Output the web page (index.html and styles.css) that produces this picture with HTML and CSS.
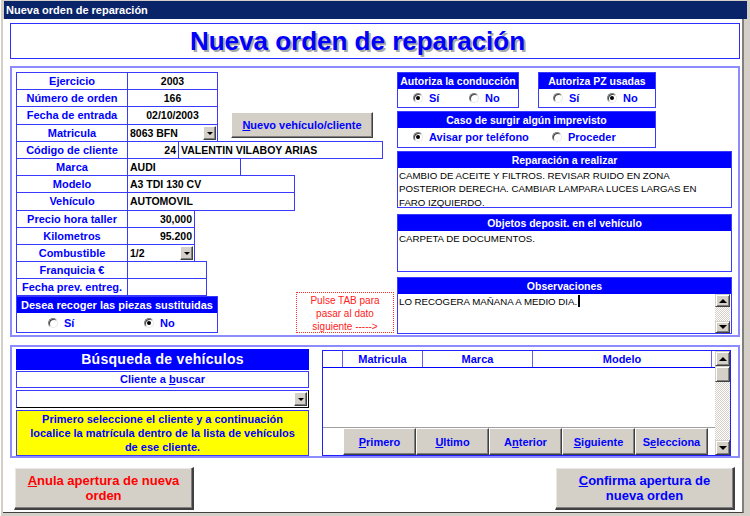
FILE: index.html
```html
<!DOCTYPE html>
<html lang="es">
<head>
    <meta charset="UTF-8">
    <title>Nueva orden de reparación</title>
    <link rel="stylesheet" href="styles.css">
</head>
<body>
<div class="window">
    <div class="titlebar">Nueva orden de reparación</div>
    <div class="client">
        <div class="heading"><h1>Nueva orden de reparación</h1></div>

        <div class="main-box">
            <div class="left-col">
                <div class="top-rows">
                    <div class="rows">
                        <div class="row"><div class="lbl">Ejercicio</div><div class="val w91 center">2003</div></div>
                        <div class="row"><div class="lbl">Número de orden</div><div class="val w91 center">166</div></div>
                        <div class="row"><div class="lbl">Fecha de entrada</div><div class="val w91 center">02/10/2003</div></div>
                        <div class="row"><div class="lbl">Matricula</div><div class="val w91 combo-val"><span>8063 BFN</span><span class="dd"></span></div></div>
                    </div>
                    <button class="btn btn-new"><u>N</u>uevo vehículo/cliente</button>
                </div>
                <div class="rows rows-rest">
                    <div class="row"><div class="lbl">Código de cliente</div><div class="val w52 right">24</div><div class="val w205">VALENTIN VILABOY ARIAS</div></div>
                    <div class="row"><div class="lbl">Marca</div><div class="val w114">AUDI</div></div>
                    <div class="row"><div class="lbl">Modelo</div><div class="val w168">A3 TDI 130 CV</div></div>
                    <div class="row"><div class="lbl">Vehículo</div><div class="val w168">AUTOMOVIL</div></div>
                    <div class="row"><div class="lbl">Precio hora taller</div><div class="val w68 right">30,000</div></div>
                    <div class="row"><div class="lbl">Kilometros</div><div class="val w68 right">95.200</div></div>
                    <div class="row"><div class="lbl">Combustible</div><div class="val w68 combo-val"><span>1/2</span><span class="dd"></span></div></div>
                    <div class="row"><div class="lbl">Franquicia €</div><div class="val w80"></div></div>
                    <div class="row"><div class="lbl">Fecha prev. entreg.</div><div class="val w80"></div></div>
                </div>
                <div class="bottom-row">
                    <div class="panel desea">
                        <div class="panel-h">Desea recoger las piezas sustituidas</div>
                        <div class="opts opts-desea">
                            <label class="opt"><span class="radio"></span>Sí</label>
                            <label class="opt"><span class="radio on"></span>No</label>
                        </div>
                    </div>
                    <div class="tab-note">Pulse TAB para<br>pasar al dato<br>siguiente -----&gt;</div>
                </div>
            </div>

            <div class="right-col">
                <div class="auth-row">
                    <div class="panel auth-a">
                        <div class="panel-h">Autoriza la conducción</div>
                        <div class="opts opts-a">
                            <label class="opt"><span class="radio on"></span>Sí</label>
                            <label class="opt"><span class="radio"></span>No</label>
                        </div>
                    </div>
                    <div class="panel auth-b">
                        <div class="panel-h">Autoriza PZ usadas</div>
                        <div class="opts opts-b">
                            <label class="opt"><span class="radio"></span>Sí</label>
                            <label class="opt"><span class="radio on"></span>No</label>
                        </div>
                    </div>
                </div>
                <div class="panel caso">
                    <div class="panel-h">Caso de surgir algún imprevisto</div>
                    <div class="opts opts-caso">
                        <label class="opt"><span class="radio on"></span>Avisar por teléfono</label>
                        <label class="opt"><span class="radio"></span>Proceder</label>
                    </div>
                </div>
                <div class="panel memo-panel reparacion">
                    <div class="panel-h">Reparación a realizar</div>
                    <div class="memo">CAMBIO DE ACEITE Y FILTROS. REVISAR RUIDO EN ZONA<br>POSTERIOR DERECHA. CAMBIAR LAMPARA LUCES LARGAS EN<br>FARO IZQUIERDO.</div>
                </div>
                <div class="panel memo-panel objetos">
                    <div class="panel-h">Objetos deposit. en el vehículo</div>
                    <div class="memo">CARPETA DE DOCUMENTOS.</div>
                </div>
                <div class="panel memo-panel observaciones">
                    <div class="panel-h">Observaciones</div>
                    <div class="memo-wrap">
                        <div class="memo">LO RECOGERA MAÑANA A MEDIO DIA.<span class="caret"></span></div>
                        <div class="vscroll short">
                            <span class="sb-btn up"></span>
                            <span class="sb-track"></span>
                            <span class="sb-btn down"></span>
                        </div>
                    </div>
                </div>
            </div>
        </div>

        <div class="search-box">
            <div class="search-left">
                <div class="search-h">Búsqueda de vehículos</div>
                <div class="search-label">Cliente a <u>b</u>uscar</div>
                <div class="combo"><span class="dd"></span></div>
                <div class="hint">Primero seleccione el cliente y a continuación<br>localice la matrícula dentro de la lista de vehículos<br>de ese cliente.</div>
            </div>
            <div class="listbox">
                <div class="lb-main">
                    <div class="lb-head">
                        <div class="lb-col c0"></div>
                        <div class="lb-col c1">Matricula</div>
                        <div class="lb-col c2">Marca</div>
                        <div class="lb-col c3">Modelo</div>
                    </div>
                    <div class="lb-body"></div>
                    <div class="lb-btns">
                        <button class="btn lb-btn"><u>P</u>rimero</button>
                        <button class="btn lb-btn"><u>U</u>ltimo</button>
                        <button class="btn lb-btn">A<u>n</u>terior</button>
                        <button class="btn lb-btn"><u>S</u>iguiente</button>
                        <button class="btn lb-btn">S<u>e</u>lecciona</button>
                    </div>
                </div>
                <div class="vscroll">
                    <span class="sb-btn up"></span>
                    <span class="sb-thumb"></span>
                    <span class="sb-track"></span>
                    <span class="sb-btn down"></span>
                </div>
            </div>
        </div>

        <div class="actions">
            <button class="btn big-btn cancel"><u>A</u>nula apertura de nueva orden</button>
            <button class="btn big-btn confirm"><u>C</u>onfirma apertura de nueva orden</button>
        </div>
    </div>
</div>
</body>
</html>
```

FILE: styles.css
```css
:root {
    --blue: #0000ff;
    --line: #3a3aff;
    --frame: #8c8cff;
    --face: #d4d0c8;
    --shadow: #808080;
    --dark: #404040;
}

* {
    margin: 0;
    padding: 0;
    box-sizing: border-box;
}

body {
    background: var(--face);
    font-family: 'Liberation Sans', Arial, sans-serif;
}

.window {
    width: 750px;
    height: 516px;
    padding: 1px 3px 3px 3px;
    background: var(--face);
    border-left: 1px solid #fff;
}

.titlebar {
    height: 18px;
    line-height: 18px;
    background: #0a246a;
    color: #fff;
    font-size: 11px;
    font-weight: bold;
    padding-left: 2px;
}

.client {
    width: 741px;
    height: 494px;
    margin-left: -1px;
    background: #fff;
    padding: 4px 0 0 7px;
    border-right: 2px solid var(--shadow);
    border-bottom: 1px solid var(--dark);
}

/* heading */
.heading {
    width: 730px;
    height: 36px;
    border: 1px solid #2d2dff;
    display: flex;
    align-items: center;
    justify-content: center;
    padding-right: 35px;
}

.heading h1 {
    color: var(--blue);
    font-size: 26px;
    font-weight: bold;
    text-shadow: 2px 2px 0 #a8a8a8;
    line-height: 1;
}

/* main block */
.main-box {
    width: 730px;
    height: 271px;
    margin-top: 7px;
    border: 2px solid var(--frame);
    padding: 4px 0 0 4px;
    display: flex;
}

.left-col {
    width: 378px;
}

.top-rows {
    display: flex;
}

.rows-rest {
    margin-top: -1px;
}

.row {
    display: flex;
    height: 18.2px;
    margin-top: -1px;
}

.row:first-child {
    margin-top: 0;
}

.lbl {
    width: 112px;
    height: 100%;
    border: 1px solid var(--line);
    color: var(--blue);
    font-size: 11px;
    font-weight: bold;
    text-align: center;
    line-height: 16px;
    white-space: nowrap;
}

.val {
    height: 100%;
    margin-left: -1px;
    border: 1px solid var(--line);
    font-size: 10.5px;
    font-weight: bold;
    line-height: 16px;
    padding: 0 2px;
    white-space: nowrap;
    color: #000;
}

.center { text-align: center; }
.right { text-align: right; }

.w91 { width: 91px; }
.w52 { width: 52px; }
.w205 { width: 205px; }
.w114 { width: 114px; }
.w168 { width: 168px; }
.w68 { width: 68px; }
.w80 { width: 80px; }

.combo-val {
    display: flex;
    justify-content: space-between;
    align-items: center;
    padding-right: 1px;
}

.dd {
    width: 13px;
    height: 14px;
    background: var(--face);
    border: 1px solid;
    border-color: #fff var(--dark) var(--dark) #fff;
    box-shadow: inset -1px -1px 0 var(--shadow);
    display: flex;
    align-items: center;
    justify-content: center;
}

.dd::after {
    content: "";
    border-top: 3px solid #000;
    border-left: 3px solid transparent;
    border-right: 3px solid transparent;
    margin-top: 1px;
}

.btn {
    font-family: 'Liberation Sans', Arial, sans-serif;
    font-weight: bold;
    background: var(--face);
    color: var(--blue);
    border: 1px solid;
    border-color: #fff var(--dark) var(--dark) #fff;
    box-shadow: inset -1px -1px 0 var(--shadow);
    cursor: pointer;
}

.btn-new {
    width: 142px;
    height: 26px;
    margin: 40px 0 0 13px;
    font-size: 11px;
}

.bottom-row {
    display: flex;
    align-items: flex-end;
    margin-top: -4px;
}

.panel {
    border: 1px solid var(--line);
    background: #fff;
}

.panel-h {
    height: 16px;
    line-height: 16px;
    background: var(--blue);
    color: #fff;
    font-size: 10.5px;
    font-weight: bold;
    text-align: center;
    white-space: nowrap;
}

.desea {
    width: 202px;
    height: 37px;
}

.desea .panel-h {
    font-size: 11px;
}

.tab-note {
    width: 98px;
    height: 41px;
    margin-left: 78px;
    border: 1px dotted #ff3030;
    color: #ff2020;
    font-size: 10px;
    line-height: 13px;
    text-align: center;
    padding-top: 1px;
}

/* radio groups */
.opts {
    display: flex;
    align-items: center;
    height: 18px;
}

.opt {
    display: flex;
    align-items: center;
    gap: 6px;
    color: var(--blue);
    font-size: 11px;
    font-weight: bold;
    white-space: nowrap;
}

.radio {
    width: 10px;
    height: 10px;
    border-radius: 50%;
    background: #fff;
    border: 1px solid;
    border-color: var(--shadow) #e8e8e8 #e8e8e8 var(--shadow);
    box-shadow: inset 1px 1px 0 var(--dark);
    display: flex;
    align-items: center;
    justify-content: center;
}

.radio.on::after {
    content: "";
    width: 4px;
    height: 4px;
    border-radius: 50%;
    background: #000;
}

.opts-a { padding-left: 15px; }
.opts-a .opt:first-child { width: 56px; }
.opts-b { padding-left: 14px; }
.opts-b .opt:first-child { width: 54px; }
.opts-caso { padding-left: 15px; }
.opts-caso .opt:first-child { width: 139px; }
.opts-desea { padding-left: 31px; height: 19px; }
.opts-desea .opt:first-child { width: 96px; }

/* right column */
.right-col {
    width: 335px;
    margin-left: 3px;
}

.auth-row {
    display: flex;
    gap: 19px;
}

.auth-a { width: 122px; height: 36px; }
.auth-b { width: 118px; height: 36px; }

.caso {
    width: 259px;
    height: 37px;
    margin-top: 3px;
}

.memo-panel {
    width: 335px;
}

.reparacion { height: 57px; margin-top: 3px; }
.objetos { height: 58px; margin-top: 6px; }
.observaciones { height: 57px; margin-top: 5px; }

.memo {
    font-size: 9.7px;
    line-height: 13.3px;
    padding: 1px 1px;
    color: #000;
    white-space: nowrap;
}

.memo-wrap {
    display: flex;
    height: 39px;
}

.memo-wrap .memo {
    flex: 1;
}

.caret {
    display: inline-block;
    width: 2px;
    height: 12px;
    background: #000;
    vertical-align: -2px;
    margin-left: 1px;
}

/* scrollbars */
.vscroll {
    width: 15px;
    display: flex;
    flex-direction: column;
}

.vscroll.short {
    margin-right: 1px;
}

.sb-btn, .sb-thumb {
    height: 15px;
    background: var(--face);
    border: 1px solid;
    border-color: var(--face) var(--dark) var(--dark) var(--face);
    box-shadow: inset 1px 1px 0 #fff, inset -1px -1px 0 var(--shadow);
    display: flex;
    align-items: center;
    justify-content: center;
    flex-shrink: 0;
}

.sb-thumb {
    height: 16px;
}

.short .sb-btn.up { height: 13px; }
.short .sb-btn.down { height: 12px; }

.sb-btn.up::after {
    content: "";
    border-bottom: 4px solid #000;
    border-left: 4px solid transparent;
    border-right: 4px solid transparent;
}

.sb-btn.down::after {
    content: "";
    border-top: 4px solid #000;
    border-left: 4px solid transparent;
    border-right: 4px solid transparent;
}

.sb-track {
    flex: 1;
    background: repeating-conic-gradient(var(--face) 0 25%, #fff 0 50%) 0 0 / 2px 2px;
}

/* search block */
.search-box {
    width: 730px;
    height: 113px;
    margin-top: 8px;
    border: 2px solid var(--frame);
    padding: 2px 0 0 4px;
    display: flex;
}

.search-left {
    width: 293px;
}

.search-h {
    height: 21px;
    line-height: 21px;
    background: var(--blue);
    color: #fff;
    font-size: 14px;
    font-weight: bold;
    letter-spacing: 0.3px;
    text-align: center;
}

.search-label {
    height: 17px;
    margin-top: 1px;
    border: 1px solid var(--line);
    color: var(--blue);
    font-size: 11px;
    font-weight: bold;
    line-height: 15px;
    text-align: center;
}

.combo {
    height: 18px;
    margin-top: 2px;
    border: 1px solid;
    border-color: var(--line) #000 #000 var(--line);
    display: flex;
    justify-content: flex-end;
    align-items: center;
    padding-right: 1px;
}

.hint {
    height: 46px;
    margin-top: 2px;
    background: #ffff00;
    border: 1px solid var(--line);
    color: var(--blue);
    font-size: 11px;
    font-weight: bold;
    line-height: 14px;
    text-align: center;
    padding-top: 1px;
    white-space: nowrap;
}

.listbox {
    width: 409px;
    height: 106px;
    margin: 1px 0 0 13px;
    border: 1px solid #2020ff;
    display: flex;
}

.lb-main {
    width: 392px;
    display: flex;
    flex-direction: column;
}

.lb-head {
    display: flex;
    height: 17px;
    border-bottom: 1px solid var(--blue);
}

.lb-col {
    color: var(--blue);
    font-size: 11px;
    font-weight: bold;
    text-align: center;
    line-height: 16px;
    border-right: 1px solid #6060ff;
}

.lb-col.c0 { width: 20px; }
.lb-col.c1 { width: 80px; }
.lb-col.c2 { width: 110px; }
.lb-col.c3 { width: 179px; }

.lb-body {
    flex: 1;
}

.lb-btns {
    display: flex;
    height: 28px;
    border-top: 1px solid #a0a0a0;
    padding-left: 20px;
}

.lb-btn {
    width: 73px;
    height: 27px;
    font-size: 11px;
}

/* bottom actions */
.actions {
    width: 730px;
    margin-top: 9px;
    display: flex;
    justify-content: space-between;
    padding: 0 5px 0 4px;
}

.big-btn {
    width: 180px;
    height: 43px;
    font-size: 13px;
    line-height: 15px;
    padding: 0 8px;
    box-shadow: inset -1px -1px 0 var(--shadow), inset 1px 1px 0 #e8e8e8;
    border-width: 1px 2px 2px 1px;
}

.big-btn.cancel {
    color: #ff0000;
}
```
